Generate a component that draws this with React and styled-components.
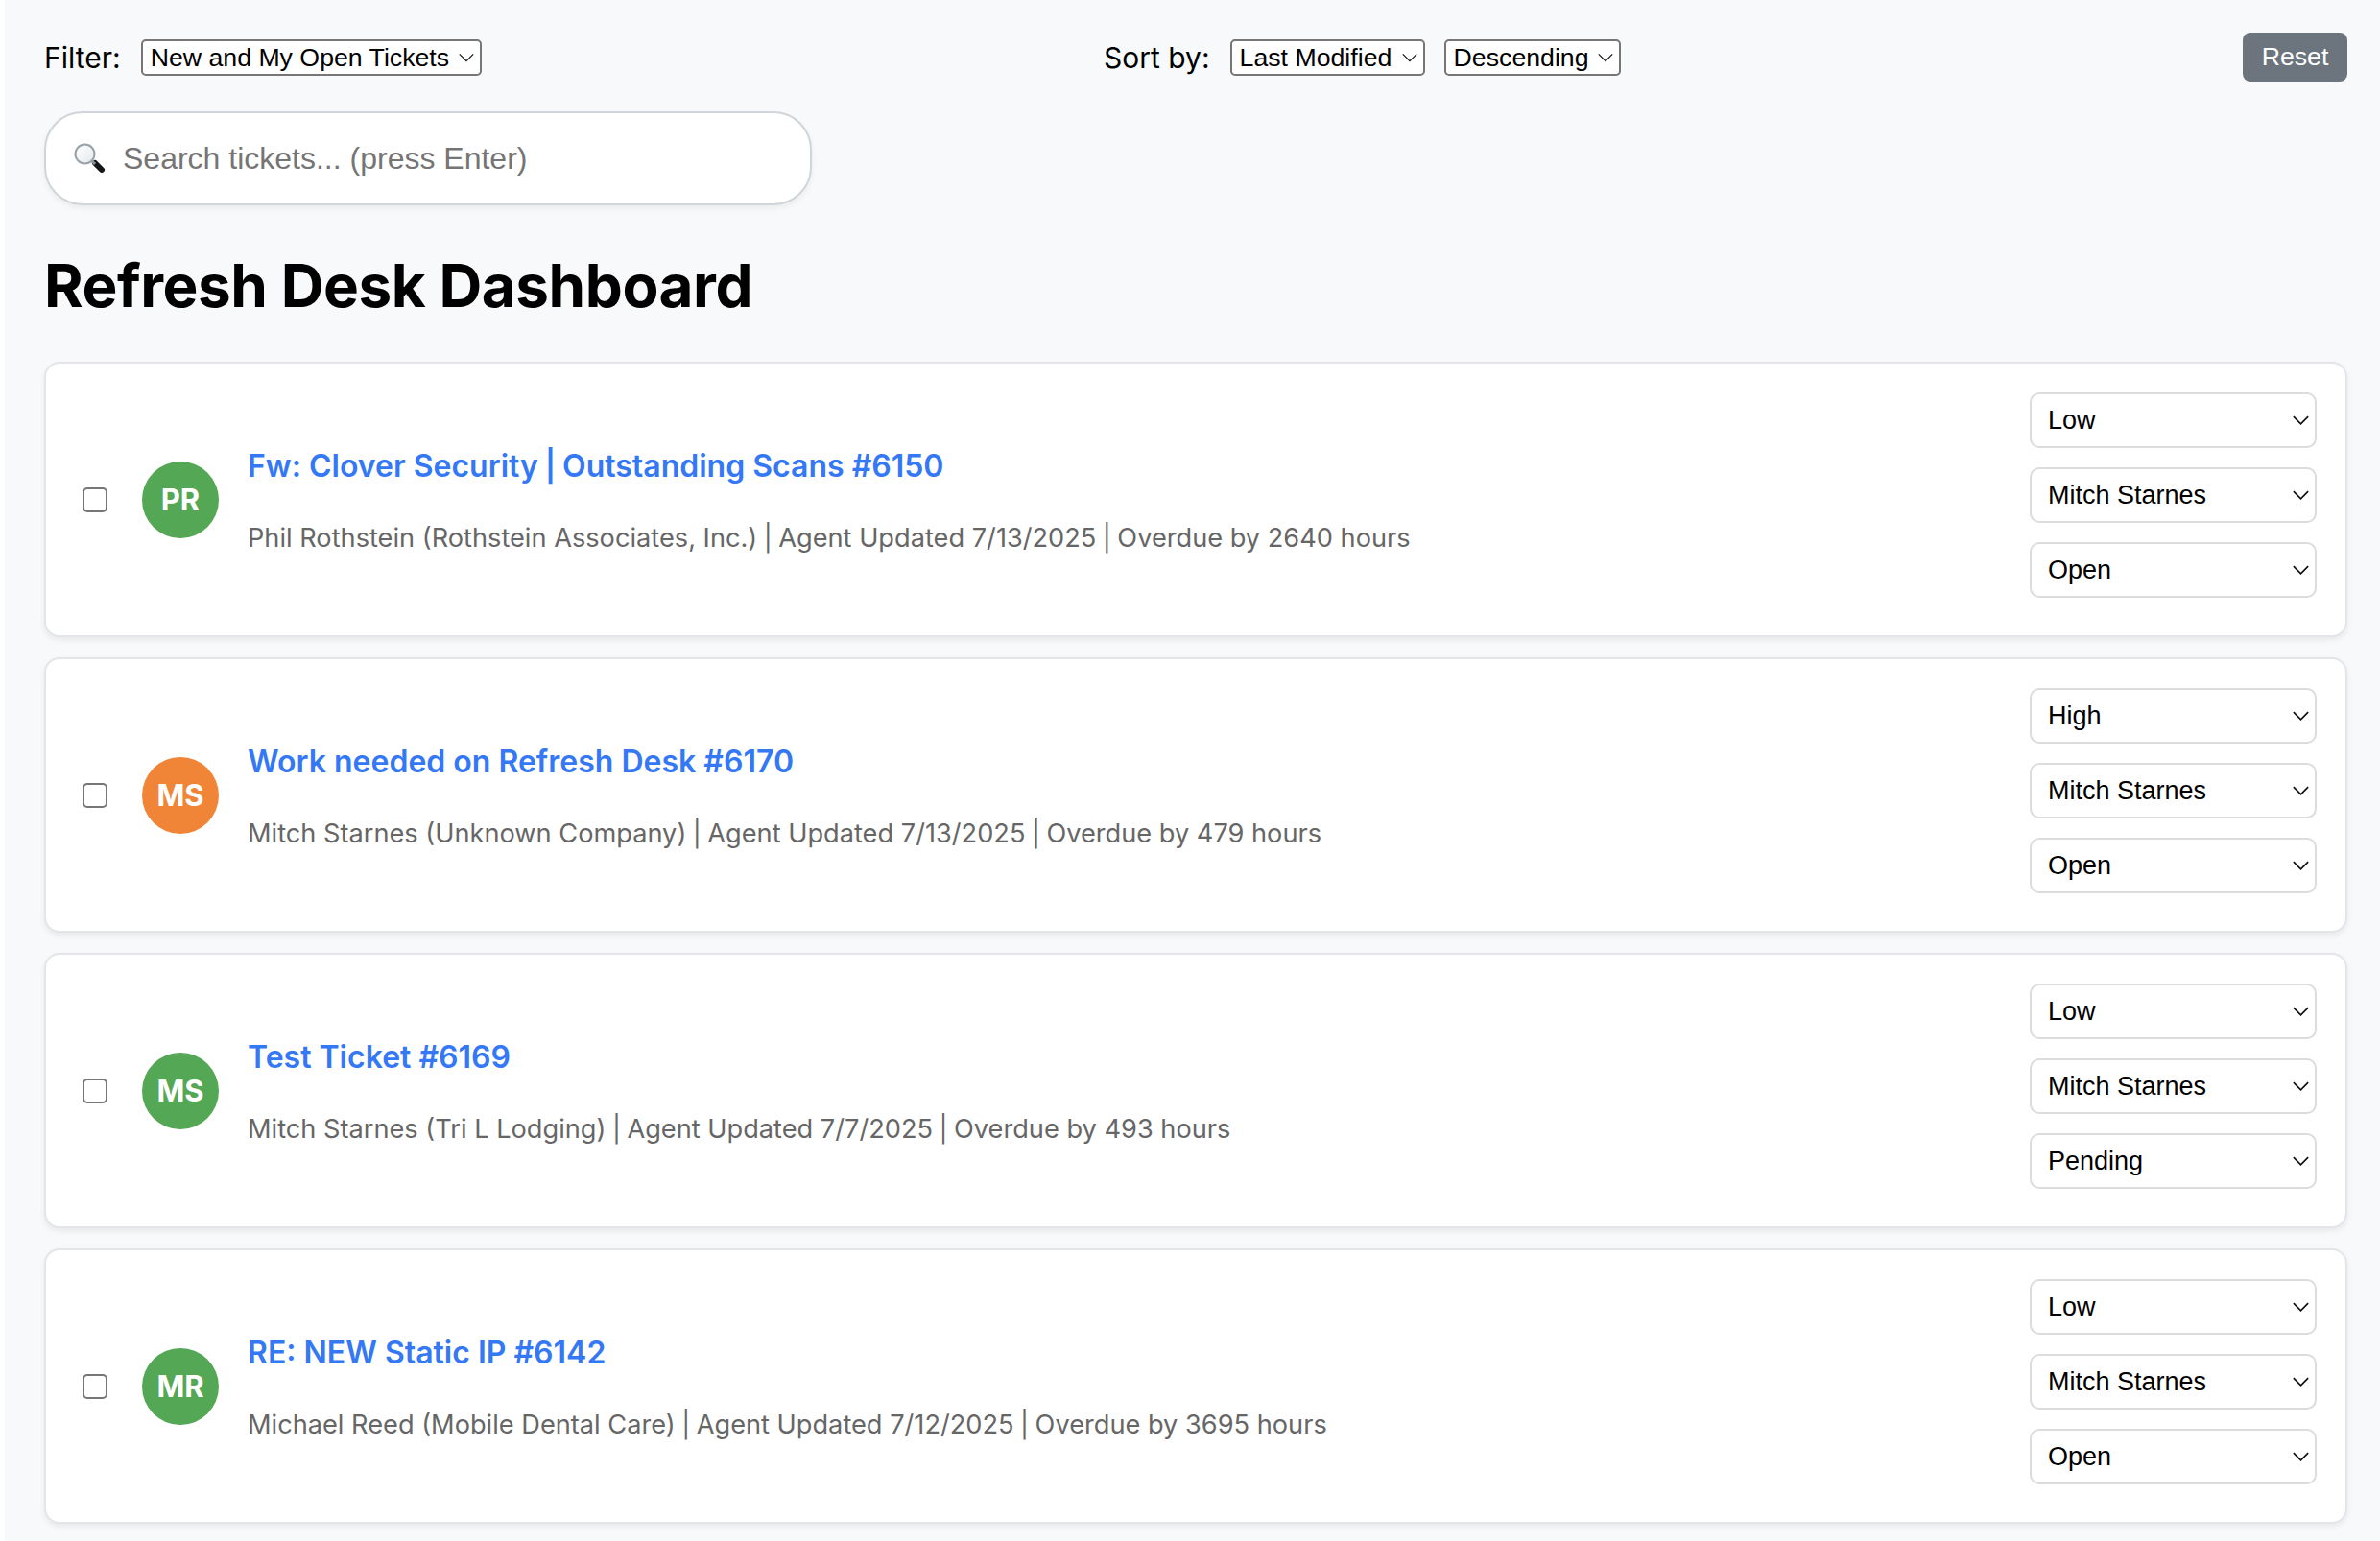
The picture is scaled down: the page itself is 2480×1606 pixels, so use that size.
import React from 'react';
import styled, { createGlobalStyle } from 'styled-components';

const GlobalStyle = createGlobalStyle`
  html, body {
    margin: 0;
    padding: 0;
    background: #ffffff;
  }
  * {
    box-sizing: border-box;
  }
`;

const Page = styled.div`
  margin-left: 5px;
  height: 1606px;
  overflow: hidden;
  background-color: #f8f9fa;
  padding: 34px 34px 0 41px;
  font-family: Inter, "Liberation Sans", sans-serif;
`;

const Toolbar = styled.div`
  display: flex;
  justify-content: space-between;
  align-items: flex-start;
  height: 51px;
`;

const ToolbarGroup = styled.div`
  display: flex;
  align-items: center;
  margin-top: 7px;
`;

const ToolbarLabel = styled.label`
  font-size: 30px;
  color: #000;
  margin-right: 21px;
`;

const SelectWrap = styled.div`
  position: relative;
  display: inline-block;
  width: ${props => props.width}px;
  margin-left: ${props => props.offset || 0}px;
  margin-bottom: ${props => props.spaced ? 20 : 0}px;

  svg {
    position: absolute;
    top: 50%;
    right: ${props => props.arrowRight}px;
    transform: translateY(-50%);
    pointer-events: none;
  }
`;

const ToolbarSelect = styled.select`
  appearance: none;
  display: block;
  width: 100%;
  height: 38px;
  padding: 0 0 0 8px;
  border: 2px solid #767676;
  border-radius: 5px;
  background: #fff;
  color: #000;
  font-family: "Liberation Sans", Arial, sans-serif;
  font-size: 26.7px;
`;

const ResetButton = styled.button`
  width: 109px;
  height: 51px;
  border: none;
  border-radius: 8px;
  background-color: #6c757d;
  color: #fff;
  font-family: "Liberation Sans", Arial, sans-serif;
  font-size: 26.7px;
`;

const SearchBox = styled.div`
  display: flex;
  align-items: center;
  width: 800px;
  height: 98px;
  margin-top: 31px;
  padding: 0 28px;
  border: 2px solid #d0d5da;
  border-radius: 40px;
  background: #fff;
  box-shadow: 0 3px 6px rgba(0, 0, 0, 0.06);
`;

const SearchInput = styled.input`
  flex: 1;
  min-width: 0;
  margin-left: 16px;
  border: none;
  outline: none;
  background: transparent;
  color: #000;
  font-family: "Liberation Sans", Arial, sans-serif;
  font-size: 32px;

  &::placeholder {
    color: #757575;
    opacity: 1;
  }
`;

const Heading = styled.h1`
  margin: 46px 0 42px;
  font-size: 62px;
  line-height: 75px;
  font-weight: 700;
  letter-spacing: -0.45px;
  color: #000;
`;

const TicketList = styled.div`
  display: flex;
  flex-direction: column;
  gap: 21px;
`;

const TicketCard = styled.div`
  display: flex;
  align-items: center;
  height: 287px;
  padding: 0 30px 0 38px;
  border: 2px solid #e3e5e8;
  border-radius: 16px;
  background: #fff;
  box-shadow: 0 3px 6px rgba(0, 0, 0, 0.07);
`;

const Checkbox = styled.input.attrs({ type: 'checkbox' })`
  appearance: none;
  flex: none;
  width: 26px;
  height: 26px;
  margin: 0 36px 0 0;
  border: 2px solid #767676;
  border-radius: 5px;
  background: #fff;
`;

const Avatar = styled.div`
  flex: none;
  display: flex;
  align-items: center;
  justify-content: center;
  width: 80px;
  height: 80px;
  margin-right: 30px;
  border-radius: 50%;
  background-color: ${props => props.color};
  color: #fff;
  font-size: 31px;
  font-weight: 650;
`;

const TicketBody = styled.div`
  flex: 1;
  min-width: 0;
  margin-top: 2px;
`;

const TicketTitle = styled.a`
  display: block;
  color: #3478f6;
  font-size: 32px;
  line-height: 40px;
  font-weight: 630;
  text-decoration: none;
`;

const TicketMeta = styled.div`
  margin-top: 38px;
  color: #666;
  font-size: 27.2px;
  line-height: 34px;
`;

const Divider = styled.span`
  margin: 0 -1.2px;
`;

const TicketControls = styled.div`
  flex: none;
  display: flex;
  flex-direction: column;
  width: 299px;
  margin-top: -9px;
`;

const ControlSelect = styled.select`
  appearance: none;
  display: block;
  width: 100%;
  height: 58px;
  padding: 0 0 0 17px;
  border: 2px solid #dcdcdc;
  border-radius: 10px;
  background: #fff;
  color: #000;
  font-family: "Liberation Sans", Arial, sans-serif;
  font-size: 27px;
`;

const Chevron = ({ width, strokeWidth }) => (
  <svg width={width} height={width * 0.6} viewBox="0 0 20 12" fill="none">
    <path d="M1 1.5l9 9 9-9" stroke="#111" strokeWidth={strokeWidth} />
  </svg>
);

// the reference uses the system magnifier emoji, drawn by hand here
const SearchGlyph = () => (
  <svg width="34" height="34" viewBox="0 0 34 34">
    <defs>
      <linearGradient id="lens" x1="0" y1="0" x2="1" y2="1">
        <stop offset="0" stopColor="#ffffff" />
        <stop offset="1" stopColor="#e4e8ec" />
      </linearGradient>
    </defs>
    <path d="M23 22l7 7" stroke="#14171a" strokeWidth="6" strokeLinecap="round" />
    <path d="M19 19l4 4" stroke="#8d949a" strokeWidth="3" />
    <circle cx="12.5" cy="12.5" r="10" fill="url(#lens)" stroke="#9aa2a9" strokeWidth="2" />
  </svg>
);

const Dropdown = ({ value, width, offset }) => (
  <SelectWrap width={width} offset={offset} arrowRight={8}>
    <ToolbarSelect defaultValue={value}>
      <option>{value}</option>
    </ToolbarSelect>
    <Chevron width={16} strokeWidth={1.5} />
  </SelectWrap>
);

const Control = ({ value, spaced }) => (
  <SelectWrap width={299} spaced={spaced} arrowRight={8}>
    <ControlSelect defaultValue={value}>
      <option>{value}</option>
    </ControlSelect>
    <Chevron width={17} strokeWidth={2} />
  </SelectWrap>
);

// the pipes sit tighter in the reference than in the installed Inter
const withDividers = text =>
  text.split(' | ').map((part, i) => (
    <React.Fragment key={part}>
      {i > 0 && <> <Divider>|</Divider> </>}
      {part}
    </React.Fragment>
  ));

const tickets = [
  {
    initials: 'PR',
    color: '#54a754',
    title: 'Fw: Clover Security | Outstanding Scans #6150',
    meta: 'Phil Rothstein (Rothstein Associates, Inc.) | Agent Updated 7/13/2025 | Overdue by 2640 hours',
    priority: 'Low',
    status: 'Open',
  },
  {
    initials: 'MS',
    color: '#f08538',
    title: 'Work needed on Refresh Desk #6170',
    meta: 'Mitch Starnes (Unknown Company) | Agent Updated 7/13/2025 | Overdue by 479 hours',
    priority: 'High',
    status: 'Open',
  },
  {
    initials: 'MS',
    color: '#54a754',
    title: 'Test Ticket #6169',
    meta: 'Mitch Starnes (Tri L Lodging) | Agent Updated 7/7/2025 | Overdue by 493 hours',
    priority: 'Low',
    status: 'Pending',
  },
  {
    initials: 'MR',
    color: '#54a754',
    title: 'RE: NEW Static IP #6142',
    meta: 'Michael Reed (Mobile Dental Care) | Agent Updated 7/12/2025 | Overdue by 3695 hours',
    priority: 'Low',
    status: 'Open',
  },
];

const App = () => (
  <Page>
    <GlobalStyle />
    <Toolbar>
      <ToolbarGroup>
        <ToolbarLabel>Filter:</ToolbarLabel>
        <Dropdown value="New and My Open Tickets" width={355} />
      </ToolbarGroup>
      <ToolbarGroup>
        <ToolbarLabel>Sort by:</ToolbarLabel>
        <Dropdown value="Last Modified" width={203} />
        <Dropdown value="Descending" width={184} offset={20} />
      </ToolbarGroup>
      <ResetButton>Reset</ResetButton>
    </Toolbar>
    <SearchBox>
      <SearchGlyph />
      <SearchInput placeholder="Search tickets... (press Enter)" />
    </SearchBox>
    <Heading>Refresh Desk Dashboard</Heading>
    <TicketList>
      {tickets.map(ticket => (
        <TicketCard key={ticket.title}>
          <Checkbox />
          <Avatar color={ticket.color}>{ticket.initials}</Avatar>
          <TicketBody>
            <TicketTitle href="#">{withDividers(ticket.title)}</TicketTitle>
            <TicketMeta>{withDividers(ticket.meta)}</TicketMeta>
          </TicketBody>
          <TicketControls>
            <Control value={ticket.priority} spaced />
            <Control value="Mitch Starnes" spaced />
            <Control value={ticket.status} />
          </TicketControls>
        </TicketCard>
      ))}
    </TicketList>
  </Page>
);

export default App;
